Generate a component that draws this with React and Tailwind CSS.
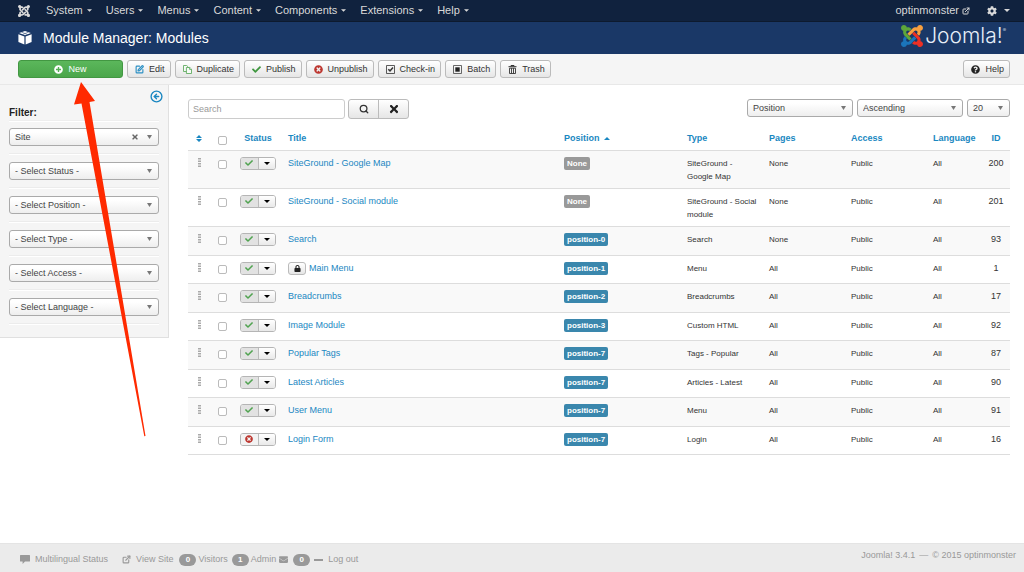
import React, { useState } from 'react';
import { CircleArrowLeft, ExternalLink, Search, SquarePen } from 'lucide-react';
import {
  FaCheck,
  FaCog,
  FaEnvelope,
  FaLock,
  FaPlusCircle,
  FaQuestionCircle,
  FaTimes,
  FaTimesCircle,
} from 'react-icons/fa';

const menus = ['System', 'Users', 'Menus', 'Content', 'Components', 'Extensions', 'Help'];

const filters = ['Status', 'Position', 'Type', 'Access', 'Language'];

const modules = [
  { id: 200, title: 'SiteGround - Google Map', type: 'SiteGround - Google Map', pages: 'None' },
  { id: 201, title: 'SiteGround - Social module', type: 'SiteGround - Social module', pages: 'None' },
  { id: 93, title: 'Search', position: 'position-0', type: 'Search', pages: 'None' },
  { id: 1, title: 'Main Menu', position: 'position-1', type: 'Menu', pages: 'All', locked: true },
  { id: 17, title: 'Breadcrumbs', position: 'position-2', type: 'Breadcrumbs', pages: 'All' },
  { id: 92, title: 'Image Module', position: 'position-3', type: 'Custom HTML', pages: 'All' },
  { id: 87, title: 'Popular Tags', position: 'position-7', type: 'Tags - Popular', pages: 'All' },
  { id: 90, title: 'Latest Articles', position: 'position-7', type: 'Articles - Latest', pages: 'All' },
  { id: 91, title: 'User Menu', position: 'position-7', type: 'Menu', pages: 'All' },
  { id: 16, title: 'Login Form', position: 'position-7', type: 'Login', pages: 'All', unpublished: true },
];

const JoomlaMark = ({ className, colors }) => (
  <svg viewBox="0 32 448 448" className={className} aria-hidden="true">
    <path fill={colors[0]} d="M.6 92.1C.6 58.8 27.4 32 60.4 32c30 0 54.5 21.9 59.2 50.2 32.6-7.6 67.1.6 96.5 30l-44.3 44.3c-20.5-20.5-42.6-16.3-55.4-3.5-14.3 14.3-14.3 37.9 0 52.2l99.5 99.5-44 44.3c-87.7-87.2-49.7-49.7-99.8-99.7-26.8-26.5-35-64.8-24.8-98.9C20.4 144.6.6 120.7.6 92.1z" />
    <path fill={colors[1]} d="M130.1 208.5l44.3 44.3c10-10 89.7-89.7 99.7-99.8 14.3-14.3 37.6-14.3 51.9 0 12.8 12.8 17 35-3.5 55.4l44 44.3c31.2-31.2 38.5-67.6 28.9-101.2 29.2-4.1 51.9-29.2 51.9-59.5 0-33.2-26.8-60.1-59.8-60.1-30.3 0-55.4 22.5-59.5 51.6-33.8-9.9-71.7-1.5-98.3 25.1-18.3 19.1-71.1 71.5-99.6 99.9z" />
    <path fill={colors[2]} d="M396.4 360.7c8.2-32.7-.9-68.5-26.3-93.9-11.8-12.2 5 4.7-99.5-99.7l-44.3 44.3 99.7 99.7c14.3 14.3 14.3 37.6 0 51.9-12.8 12.8-35 17-55.4-3.5l-44 44.3c27.6 30.2 68 38.8 102.7 28 5.5 27.4 29.7 48.1 58.9 48.1 33 0 59.8-26.8 59.8-60.1 0-30.2-22.5-55-51.6-59.1z" />
    <path fill={colors[3]} d="M312.1 307.6l-44-44.3c-87 86.4-50.4 50.4-99.7 99.8-14.3 14.3-37.6 14.3-51.9 0-13.1-13.4-16.9-35.3 3.2-55.4l-44-44.3c-30.2 30.2-38 65.2-29.5 98.3-26.7 6-46.2 29.9-46.2 58.2C0 453.2 26.8 480 59.8 480c28.6 0 52.5-19.8 58.6-46.7 32.7 8.2 68.5-.6 94.2-26 32.1-32 12.2-12.4 99.5-99.7z" />
  </svg>
);

const Caret = ({ className }) => (
  <svg viewBox="0 0 6 3" className={className} fill="currentColor" aria-hidden="true">
    <path d="M0 0h6L3 3z" />
  </svg>
);

const CubeIcon = () => (
  <svg viewBox="0 0 14 14" className="h-[14px] w-[14px]" fill="#fff" aria-hidden="true">
    <path d="M7 0l5.8 2.1L7 4.3 1.2 2.1z" />
    <path d="M.4 3.2l6 2.3v8L.4 11z" />
    <path d="M13.6 3.2l-6 2.3v8l6-2.5z" />
    <path d="M3.6 1.2l5.9 2.3M10.4 1.2L4.5 3.5" stroke="#1a3867" strokeWidth=".5" />
  </svg>
);

const DuplicateIcon = () => (
  <svg viewBox="0 0 9 9" className="h-[9px] w-[9px]" fill="#f6faf6" stroke="#51a351" strokeWidth=".8" aria-hidden="true">
    <path d="M.5.5h3.2l1.6 1.6v4.4H.5z" />
    <path d="M3.4 2.5h3.4l1.7 1.7v4.3H3.4z" />
    <path d="M6.6 2.6v1.8h1.8" />
  </svg>
);

const CheckinIcon = () => (
  <svg viewBox="0 0 9 9" className="h-[9px] w-[9px]" fill="none" stroke="#333" aria-hidden="true">
    <path d="M.5.5h8v8h-8z" strokeWidth=".8" />
    <path d="M2.3 4.2l1.7 1.7 3-3.4" strokeWidth="1.5" />
  </svg>
);

const BatchIcon = () => (
  <svg viewBox="0 0 9 9" className="h-[9px] w-[9px]" aria-hidden="true">
    <path d="M.5.5h8v8h-8z" fill="none" stroke="#444" strokeWidth=".8" />
    <path d="M2.3 2.3h4.4v4.4H2.3z" fill="#222" />
  </svg>
);

const TrashIcon = () => (
  <svg viewBox="0 0 9 9" className="h-[9px] w-[9px]" fill="none" stroke="#333" aria-hidden="true">
    <path d="M.5 1.7h8M3 1.4V.5h3v.9" strokeWidth="1" />
    <path d="M1.5 3.2h6v5.3h-6zM3.5 3.2v5.2M5.5 3.2v5.2" strokeWidth=".9" />
  </svg>
);

const CommentIcon = () => (
  <svg viewBox="0 0 10 9" className="h-[9px] w-[10px]" fill="currentColor" aria-hidden="true">
    <path d="M.6 0h8.8q.6 0 .6.6v5.3q0 .6-.6.6H5L2.6 9V6.500H.6Q0 6.500 0 5.900V.6Q0 0 .6 0z" />
  </svg>
);

const DragIcon = () => (
  <svg viewBox="0 0 3 9" className="mx-auto h-[9px] w-[3px]" fill="#aaa" aria-hidden="true">
    <path d="M0 0h3v1.5H0zM0 2.500h3V4H0zM0 5h3v1.500H0zM0 7.500h3V9H0z" />
  </svg>
);

const tools = [
  { label: 'Edit', icon: <SquarePen className="size-[9px] text-[#2a8fc4]" strokeWidth={3} /> },
  { label: 'Duplicate', icon: <DuplicateIcon /> },
  { label: 'Publish', icon: <FaCheck className="size-[9px] text-[#409740]" /> },
  { label: 'Unpublish', icon: <FaTimesCircle className="size-[9px] text-[#bd362f]" /> },
  { label: 'Check-in', icon: <CheckinIcon /> },
  { label: 'Batch', icon: <BatchIcon /> },
  { label: 'Trash', icon: <TrashIcon /> },
];

const ToolButton = ({ icon, label }) => (
  <button className="flex h-[18px] items-center gap-[5px] rounded-[3px] border border-[#bbb] bg-linear-to-b from-white to-[#e6e6e6] pr-[5px] pl-[7px] whitespace-nowrap text-[#333]">
    {icon}
    {label}
  </button>
);

const SelectBox = ({ label, value, clearable, className }) => (
  <div className={`relative ${className}`}>
    <select
      aria-label={label}
      className="block h-[18px] w-full appearance-none rounded-[3px] border border-[#aaa] bg-linear-to-b from-white from-20% to-[#eee] pr-4 pl-[5px] text-[#444]"
    >
      <option>{value}</option>
    </select>
    {clearable && <FaTimes className="pointer-events-none absolute top-[5px] right-5 size-2 text-[#666]" />}
    <svg viewBox="0 0 5 4" className="pointer-events-none absolute top-[7px] right-[7px] h-[4px] w-[5px]" fill="#777" aria-hidden="true">
      <path d="M0 0h5L2.5 4z" />
    </svg>
  </div>
);

const CheckBox = ({ label, checked, onChange }) => (
  <input
    type="checkbox"
    aria-label={label}
    checked={checked}
    onChange={onChange}
    className="mx-auto block size-[9px] appearance-none rounded-[2px] border border-[#bbb] bg-white checked:bg-[#2187c2]"
  />
);

const StatusButtons = ({ unpublished }) => (
  <div className="flex h-[13px] w-[36px] overflow-hidden rounded-[3px] border border-[#b5b5b5]">
    <button
      aria-label={unpublished ? 'Publish' : 'Unpublish'}
      className={`flex flex-1 items-center justify-center border-r border-[#bbb] ${unpublished ? 'bg-[#f3f3f3]' : 'bg-[#e2e2e2]'}`}
    >
      {unpublished ? <FaTimesCircle className="size-2 text-[#bd362f]" /> : <FaCheck className="size-2 text-[#51a351]" />}
    </button>
    <button aria-label="More actions" className="flex flex-1 items-center justify-center bg-linear-to-b from-white to-[#e9e9e9]">
      <Caret className="h-[3px] w-[6px] text-black" />
    </button>
  </div>
);

const CountBadge = ({ children }) => (
  <span className="flex h-3 w-[17px] items-center justify-center rounded-full bg-[#999] text-[8px] font-bold text-white">
    {children}
  </span>
);

const App = () => {
  const [selected, setSelected] = useState([]);

  const toggle = (id) => {
    setSelected((prev) => (prev.includes(id) ? prev.filter((item) => item !== id) : [...prev, id]));
  };

  const toggleAll = () => {
    setSelected(selected.length === modules.length ? [] : modules.map((item) => item.id));
  };

  return (
    <div className="relative flex min-h-screen flex-col bg-white font-['Liberation_Sans',Arial,sans-serif] text-[9px] leading-[13px] text-[#333]">
      <nav className="flex h-[22px] items-center justify-between border-b border-[#0d1a2e] bg-[#10223e] pr-3.5 pl-[18px] text-[11px] text-[#d9d9d9]">
        <div className="flex items-center">
          <a href="#home" aria-label="Control Panel" className="mr-4">
            <JoomlaMark className="size-3" colors={['#d9d9d9', '#d9d9d9', '#d9d9d9', '#d9d9d9']} />
          </a>
          <div className="flex gap-3.5">
            {menus.map((menu) => (
              <a key={menu} href={`#${menu.toLowerCase()}`} className="flex items-center gap-1">
                {menu}
                <Caret className="h-[3px] w-[5px]" />
              </a>
            ))}
          </div>
        </div>
        <div className="flex items-center">
          <a href="#site" className="flex items-center gap-[3px]">
            optinmonster
            <ExternalLink className="size-2" strokeWidth={3} />
          </a>
          <button aria-label="User menu" className="ml-[17px] flex items-center gap-[7px]">
            <FaCog className="size-2.5" />
            <Caret className="h-[3px] w-[6px]" />
          </button>
        </div>
      </nav>

      <header className="flex h-8 items-center justify-between bg-[#1a3867] px-[18px] text-white">
        <div className="flex items-center gap-[11px]">
          <CubeIcon />
          <h1 className="text-[14px]">Module Manager: Modules</h1>
        </div>
        <div className="flex items-center gap-[2px] pb-1">
          <JoomlaMark className="size-[22px]" colors={['#5da73a', '#f9a03f', '#ee3024', '#1b75bb']} />
          <span className="flex items-start font-['Inter',sans-serif] text-[21px] leading-5 font-light text-[#e6eef7]">
            Joomla!
            <span className="text-[5px] leading-[8px]">®</span>
          </span>
        </div>
      </header>

      <div className="flex items-start justify-between border-b border-[#e8e8e8] bg-[#f5f5f5] pt-1.5 pr-3.5 pb-1.5 pl-[18px]">
        <div className="flex gap-1">
          <button className="flex h-[18px] w-[105px] items-center justify-center gap-[5px] rounded-[3px] border border-[#429742] bg-linear-to-b from-[#5bb75b] to-[#4ba64b] text-white">
            <FaPlusCircle className="size-[9px]" />
            New
          </button>
          {tools.map((tool) => (
            <ToolButton key={tool.label} {...tool} />
          ))}
        </div>
        <ToolButton label="Help" icon={<FaQuestionCircle className="size-[9px] text-[#222]" />} />
      </div>

      <div className="flex grow items-start">
        <aside className="w-[169px] shrink-0 border-r border-b border-[#e0e0e0] bg-[#f5f5f5] px-[9px] pt-[5px] pb-3">
          <div className="-mr-1 flex justify-end">
            <button aria-label="Hide the sidebar">
              <CircleArrowLeft className="size-[13px] text-[#1a87c1]" strokeWidth={2.5} />
            </button>
          </div>
          <h2 className="mt-[3px] text-[10px] font-bold text-[#222]">Filter:</h2>
          <div className="mt-px mb-1.5 border-t border-b border-t-[#eee] border-b-white" />
          <SelectBox label="Client" value="Site" clearable className="w-full" />
          {filters.map((filter) => (
            <React.Fragment key={filter}>
              <div className="my-[7px] border-t border-b border-t-[#ececec] border-b-white" />
              <SelectBox label={filter} value={`- Select ${filter} -`} className="w-full" />
            </React.Fragment>
          ))}
          <div className="mt-[7px] border-t border-b border-t-[#ececec] border-b-white" />
        </aside>

        <main className="min-w-0 flex-1 pt-3.5 pr-3.5 pb-4 pl-[19px]">
          <div className="flex items-start justify-between">
            <div className="flex gap-[3px]">
              <input
                type="text"
                placeholder="Search"
                aria-label="Search"
                className="h-5 w-[157px] rounded-[3px] border border-[#ccc] px-1 placeholder:text-[#999]"
              />
              <div className="flex h-5 w-[61px] overflow-hidden rounded-[3px] border border-[#bbb] bg-linear-to-b from-white to-[#e6e6e6]">
                <button aria-label="Search modules" className="flex flex-1 items-center justify-center border-r border-[#bbb]">
                  <Search className="size-2.5 text-[#333]" strokeWidth={3} />
                </button>
                <button aria-label="Clear" className="flex flex-1 items-center justify-center">
                  <FaTimes className="size-3 text-[#222]" />
                </button>
              </div>
            </div>
            <div className="flex gap-1">
              <SelectBox label="Sort by" value="Position" className="w-[106px]" />
              <SelectBox label="Direction" value="Ascending" className="w-[106px]" />
              <SelectBox label="Limit" value="20" className="w-[43px]" />
            </div>
          </div>

          <table className="mt-2 w-full table-fixed border-b border-[#ddd]">
            <colgroup>
              <col className="w-[22px]" />
              <col className="w-[24px]" />
              <col className="w-[48px]" />
              <col />
              <col className="w-[123px]" />
              <col className="w-[82px]" />
              <col className="w-[82px]" />
              <col className="w-[82px]" />
              <col className="w-[55px]" />
              <col className="w-[28px]" />
            </colgroup>
            <thead>
              <tr className="h-[23px] text-left whitespace-nowrap text-[#1a87c1]">
                <th>
                  <svg viewBox="0 0 6 7" className="mx-auto h-[7px] w-[6px]" fill="currentColor" aria-label="Ordering">
                    <path d="M0 3l3-3 3 3zM0 4h6L3 7z" />
                  </svg>
                </th>
                <th className="pt-1">
                  <CheckBox label="Check all" checked={selected.length === modules.length} onChange={toggleAll} />
                </th>
                <th className="text-center">
                  <a href="#status">Status</a>
                </th>
                <th className="px-1.5">
                  <a href="#title">Title</a>
                </th>
                <th className="px-1.5">
                  <a href="#position" className="flex items-center gap-1">
                    Position
                    <Caret className="h-[3px] w-[6px] rotate-180" />
                  </a>
                </th>
                <th className="px-1.5">
                  <a href="#type">Type</a>
                </th>
                <th className="px-1.5">
                  <a href="#pages">Pages</a>
                </th>
                <th className="px-1.5">
                  <a href="#access">Access</a>
                </th>
                <th className="px-1.5">
                  <a href="#language">Language</a>
                </th>
                <th className="text-center">
                  <a href="#id">ID</a>
                </th>
              </tr>
            </thead>
            <tbody>
              {modules.map((item) => (
                <tr key={item.id} className="border-t border-[#ddd] align-top text-[8px] odd:h-[29px] odd:bg-[#f9f9f9] even:h-[28px]">
                  <td className="pt-[7px]">
                    <DragIcon />
                  </td>
                  <td className="pt-[9px]">
                    <CheckBox label={`Select ${item.title}`} checked={selected.includes(item.id)} onChange={() => toggle(item.id)} />
                  </td>
                  <td className="px-1.5 pt-1.5">
                    <StatusButtons unpublished={item.unpublished} />
                  </td>
                  <td className="px-1.5 pt-1.5 text-[9px]">
                    <div className="flex items-center gap-[3px]">
                      {item.locked && (
                        <button aria-label="Checked out" className="flex h-[13px] w-[18px] items-center justify-center rounded-[3px] border border-[#bbb] bg-linear-to-b from-white to-[#e6e6e6]">
                          <FaLock className="size-[7px] text-[#222]" />
                        </button>
                      )}
                      <a href={`#module-${item.id}`} className="text-[#2187c2]">
                        {item.title}
                      </a>
                    </div>
                  </td>
                  <td className="px-1.5 pt-1.5">
                    <span className={`block w-fit rounded-[2px] px-[3px] font-bold text-white ${item.position ? 'bg-[#3a87ad]' : 'bg-[#999]'}`}>
                      {item.position || 'None'}
                    </span>
                  </td>
                  <td className="px-1.5 pt-1.5 pb-[5px]">{item.type}</td>
                  <td className="px-1.5 pt-1.5">{item.pages}</td>
                  <td className="px-1.5 pt-1.5">Public</td>
                  <td className="px-1.5 pt-1.5">All</td>
                  <td className="pt-1.5 text-center text-[9px]">{item.id}</td>
                </tr>
              ))}
            </tbody>
          </table>
        </main>
      </div>

      <footer className="flex h-[29px] items-start justify-between border-t border-[#e4e4e4] bg-[#ebebeb] pr-2 pl-5 text-[#999]">
        <div className="flex items-center pt-[9px]">
          <a href="#multilingual" className="mr-3.5 flex items-center gap-[5px]">
            <CommentIcon />
            Multilingual Status
          </a>
          <a href="#view" className="mr-1.5 flex items-center gap-[5px]">
            <ExternalLink className="size-[9px]" strokeWidth={3} />
            View Site
          </a>
          <div className="mr-1 flex items-center gap-[2px]">
            <CountBadge>0</CountBadge>
            Visitors
          </div>
          <div className="mr-[3px] flex items-center gap-[2px]">
            <CountBadge>1</CountBadge>
            Admin
          </div>
          <a href="#messages" className="mr-1 flex items-center gap-[5px]">
            <FaEnvelope className="size-[9px]" />
            <CountBadge>0</CountBadge>
          </a>
          <a href="#logout" className="flex items-center gap-[5px]">
            <span className="h-[2px] w-[9px] bg-[#999]" />
            Log out
          </a>
        </div>
        <p className="flex gap-1 pt-[5px]">
          <span>Joomla! 3.4.1</span>
          <span>—</span>
          <span>© 2015 optinmonster</span>
        </p>
      </footer>

      {/* pointer to the New button */}
      <svg viewBox="0 0 24 356" className="pointer-events-none absolute top-[82px] left-[74px] h-[356px] w-[24px] overflow-visible" aria-hidden="true">
        <path d="M7 0L21 19l-5.5 1L71.5 354l-1.2.3L7.5 21.5 0 22.5z" fill="#ff2a00" />
      </svg>
    </div>
  );
};

export default App;
